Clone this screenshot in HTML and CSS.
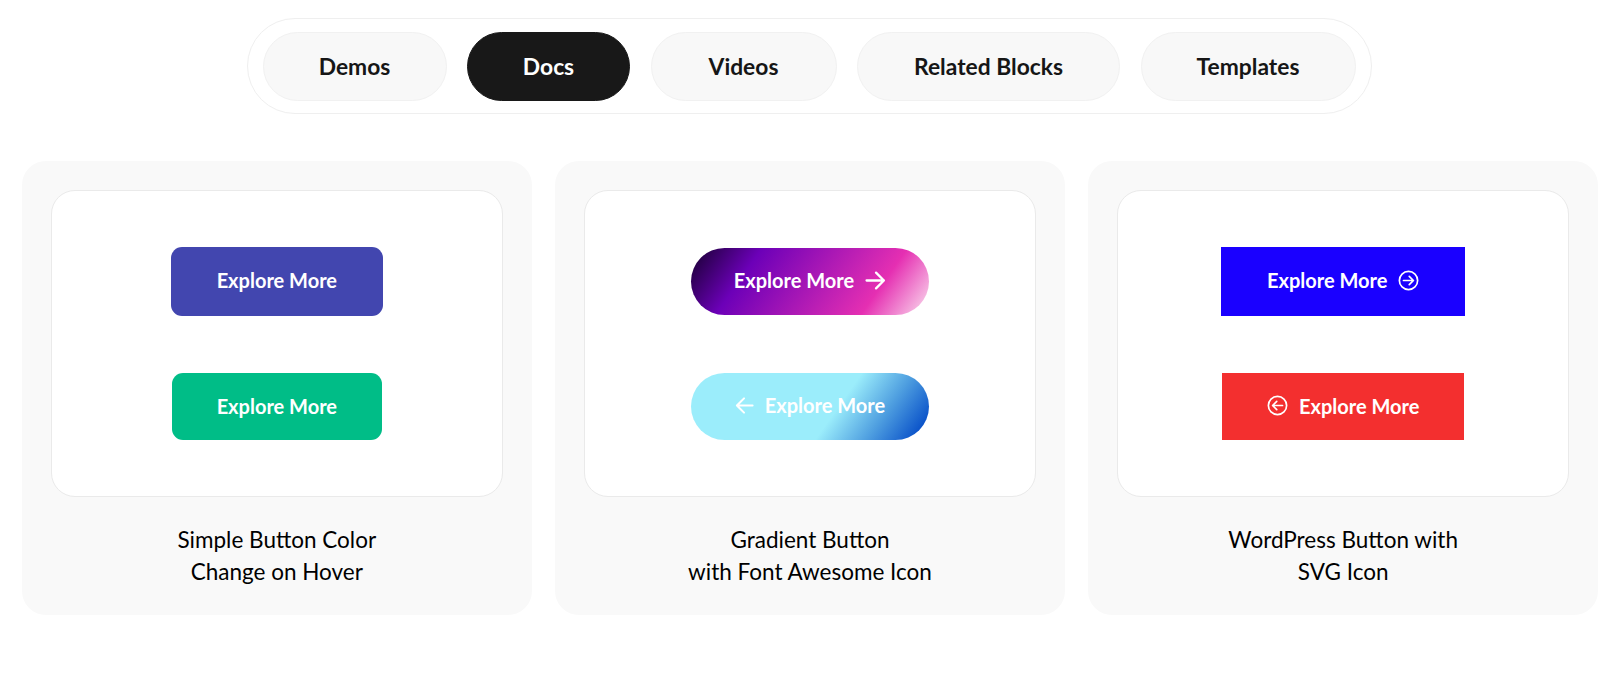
FILE: index.html
```html
<!DOCTYPE html>
<html lang="en">
<head>
<meta charset="utf-8">
<title>Explore More Buttons</title>
<link rel="stylesheet" href="styles.css">
</head>
<body>
<nav class="tabs">
  <a class="tab tab-demos">Demos</a>
  <a class="tab tab-docs active">Docs</a>
  <a class="tab tab-videos">Videos</a>
  <a class="tab tab-related">Related Blocks</a>
  <a class="tab tab-templates">Templates</a>
</nav>
<main class="cards">
  <section class="card">
    <div class="preview">
      <a class="btn btn-indigo">Explore More</a>
      <a class="btn btn-green">Explore More</a>
    </div>
    <h3 class="title">Simple Button Color<br>Change on Hover</h3>
  </section>
  <section class="card">
    <div class="preview preview-grad">
      <a class="btn btn-grad1">Explore More
        <svg class="ico-arrow" viewBox="0 0 20 20"><path d="M1.500 10H18M10.500 2.500 18 10l-7.500 7.500"/></svg>
      </a>
      <a class="btn btn-grad2">
        <svg class="ico-arrow ico-small" viewBox="0 0 20 20"><path d="M18.500 10H2M9.500 2.500 2 10l7.500 7.500"/></svg>
        Explore More
      </a>
    </div>
    <h3 class="title">Gradient Button<br>with Font Awesome Icon</h3>
  </section>
  <section class="card">
    <div class="preview">
      <a class="btn btn-blue">Explore More
        <svg class="ico-circle" viewBox="0 0 20 20"><circle cx="10" cy="10" r="8.700"/><path d="M5.200 10h9.400M10.700 6l4 4-4 4"/></svg>
      </a>
      <a class="btn btn-red">
        <svg class="ico-circle" viewBox="0 0 20 20"><circle cx="10" cy="10" r="8.700"/><path d="M14.800 10H5.400M9.300 6l-4 4 4 4"/></svg>
        Explore More
      </a>
    </div>
    <h3 class="title">WordPress Button with<br>SVG Icon</h3>
  </section>
</main>
</body>
</html>
```
FILE: styles.css
```css
* { box-sizing: border-box; }
html, body { margin: 0; padding: 0; }
body {
  background: #fff;
  font-family: "Lato", "Open Sans", sans-serif;
  color: #111;
  height: 679px;
  overflow: hidden;
  padding-top: 18px;
}
.tabs {
  display: flex;
  gap: 20.500px;
  width: 1125px;
  height: 96px;
  margin: 0 auto;
  padding: 13px 14px 13px 15px;
  border: 1px solid #efefef;
  border-radius: 48px;
  background: #fff;
}
.tab {
  display: flex;
  align-items: center;
  justify-content: center;
  height: 69px;
  padding-bottom: 2px;
  border: 1px solid #f1f1f1;
  border-radius: 35px;
  background: #f8f8f8;
  color: #161616;
  font-size: 22.800px;
  font-weight: 700;
}
.tab-demos { width: 184px; }
.tab-docs { width: 163px; }
.tab-videos { width: 186px; }
.tab-related { width: 263px; }
.tab-templates { width: 215px; }
.tab.active { background: #181818; border-color: #181818; color: #fff; }
.cards {
  display: grid;
  grid-template-columns: repeat(3, 1fr);
  gap: 22.500px;
  width: 1577px;
  margin: 47px 0 0 21.500px;
}
.card {
  height: 454px;
  padding: 29px 29.500px 0;
  border-radius: 24px;
  background: #f9f9f9;
}
.preview {
  display: flex;
  flex-direction: column;
  align-items: center;
  justify-content: center;
  gap: 57.500px;
  height: 307px;
  border: 1px solid #eaeaea;
  border-radius: 24px;
  background: #fff;
}
.preview-grad { gap: 58px; }
.title {
  margin: 27px 0 0;
  color: #000;
  font-size: 22.500px;
  font-weight: 400;
  line-height: 32px;
  text-align: center;
}
.btn {
  display: flex;
  align-items: center;
  justify-content: center;
  gap: 11px;
  padding-bottom: 2px;
  color: #fff;
  font-size: 20px;
  font-weight: 700;
  white-space: nowrap;
}
.btn-indigo { width: 212px; height: 69px; border-radius: 11px; background: #4246af; }
.btn-green { width: 210px; height: 67px; border-radius: 11px; background: #00bd87; }
.btn-grad1 {
  width: 238px; height: 67px; border-radius: 34px;
  background: linear-gradient(125deg, #1c0038 2%, #6c00b8 25%, #e52fb2 76%, #f9d2ea 98%);
}
.btn-grad2 {
  width: 238px; height: 67px; border-radius: 34px;
  background: linear-gradient(125deg, #9bedfb 0%, #9bedfb 60%, #4f9fe0 78%, #0047c6 97%);
}
.btn-blue { width: 244px; height: 69px; background: #1a00ff; }
.btn-red { width: 242px; height: 67px; background: #f32f2f; }
.ico-arrow, .ico-circle {
  flex: none;
  fill: none;
  stroke: #fff;
  stroke-width: 2.200;
  stroke-linecap: round;
  stroke-linejoin: round;
}
.ico-arrow { width: 21px; height: 21px; }
.ico-small { width: 19px; height: 19px; }
.ico-circle { width: 21px; height: 21px; stroke-width: 1.600; }
```
